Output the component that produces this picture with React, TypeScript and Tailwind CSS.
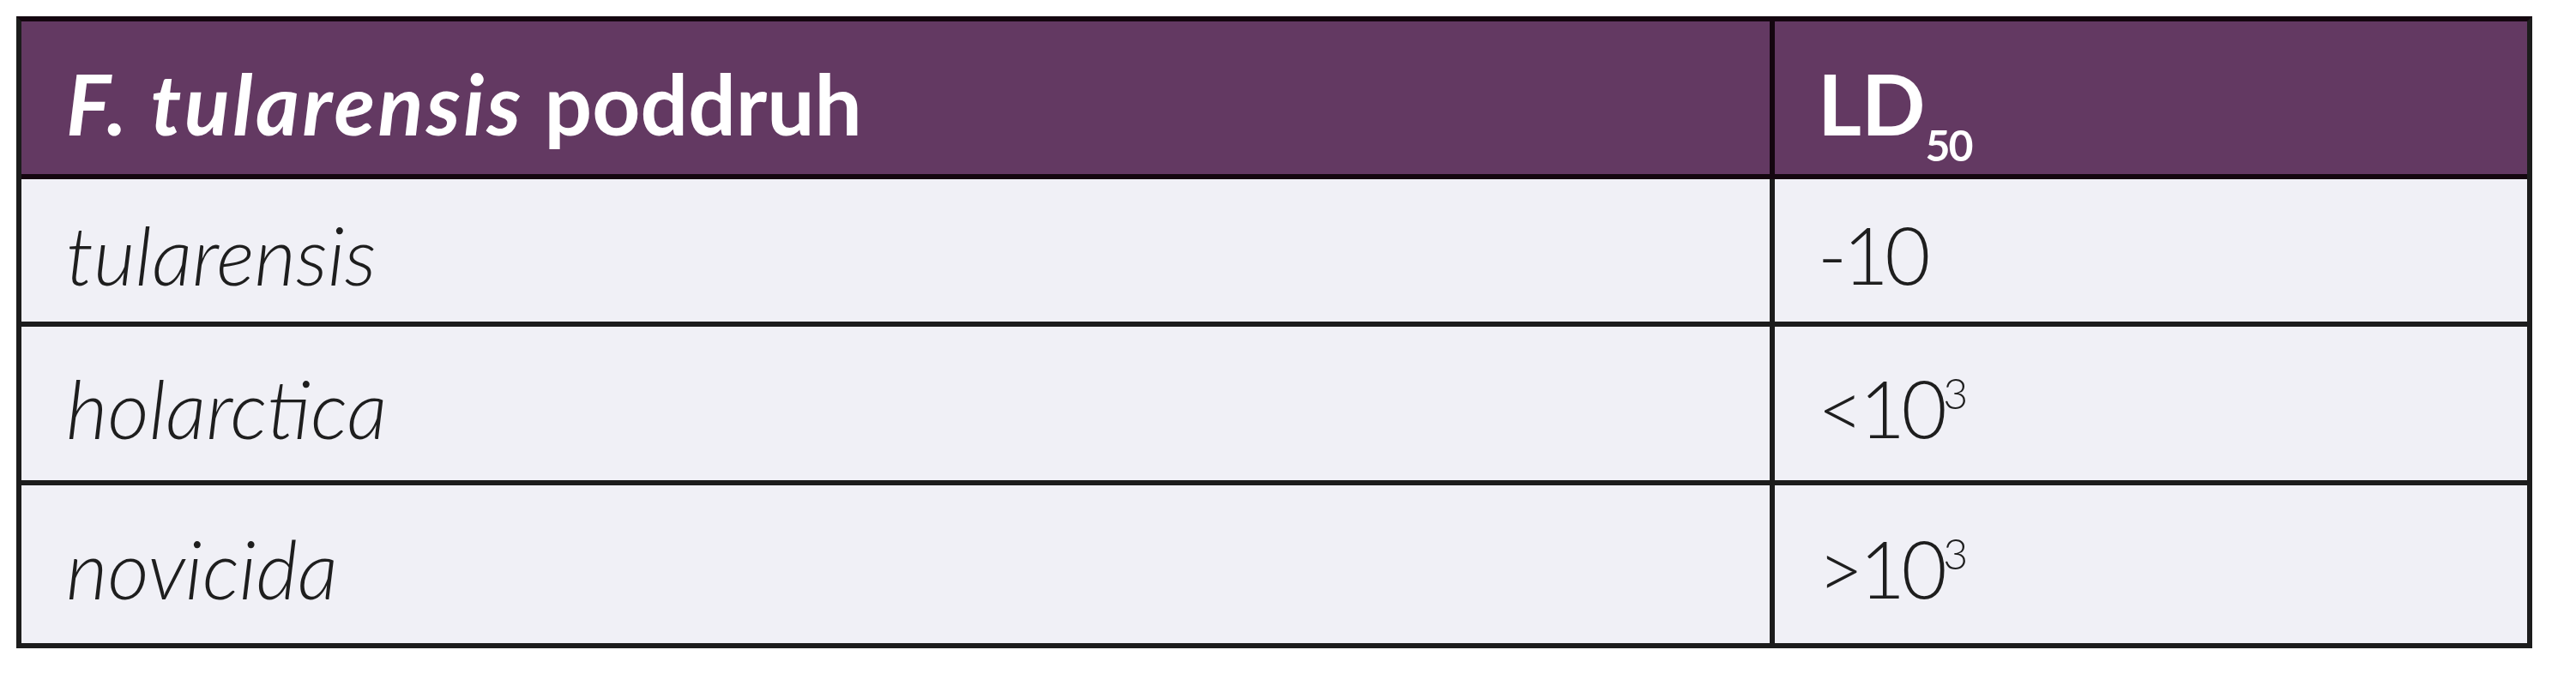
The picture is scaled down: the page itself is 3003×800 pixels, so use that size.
// LD50 table for F. tularensis subspecies: purple header row, three pale data rows.

const sup = 'relative top-[-2px] align-super text-[50px] tracking-normal'

const rows = [
  { name: 'tularensis', value: <>-10</>, height: 'h-[172px]' },
  {
    name: 'holarctica',
    value: (
      <>
        &lt;10<sup className={sup}>3</sup>
      </>
    ),
    height: 'h-[185px]',
  },
  {
    name: 'novicida',
    value: (
      <>
        &gt;10<sup className={sup}>3</sup>
      </>
    ),
    height: 'h-[184px]',
  },
]

export default function App() {
  return (
    <div className="min-h-[800px] w-[3003px] bg-white p-[19px] font-['Lato','Liberation_Sans',sans-serif]">
      <div className="w-[2933px] border-[6px] border-[#1c1c1c] border-t-[#14060f]">
        {/* header */}
        <div className="flex h-[184px] border-b-[6px] border-[#14060f] bg-[#633962] text-white">
          <div className="flex w-[2044px] items-center border-r-[6px] border-[#14060f] pl-[52px] pt-[12px] text-[98px] font-bold leading-none">
            <span>
              <i className="tracking-[0.035em]">F. tularensis</i> poddruh
            </span>
          </div>
          <div className="flex flex-1 items-center pl-[50px] pt-[12px] text-[98px] font-bold leading-none">
            <span>
              LD<sub className="relative top-[30px] align-baseline text-[50px] tracking-[-0.04em]">50</sub>
            </span>
          </div>
        </div>

        {rows.map((row, i) => (
          <div
            key={row.name}
            className={`flex bg-[#f0f0f6] text-[#1e1e1e] ${row.height} ${i < rows.length - 1 ? 'border-b-[6px] border-[#1c1c1c]' : ''}`}
          >
            <div className="flex w-[2044px] items-center border-r-[6px] border-[#1c1c1c] pl-[52px] pt-[10px] text-[94px] font-light italic leading-none">
              {row.name}
            </div>
            <div className="flex flex-1 items-center pl-[50px] pt-[10px] text-[92px] font-light leading-none tracking-[-0.05em]">
              <span>{row.value}</span>
            </div>
          </div>
        ))}
      </div>
    </div>
  )
}
